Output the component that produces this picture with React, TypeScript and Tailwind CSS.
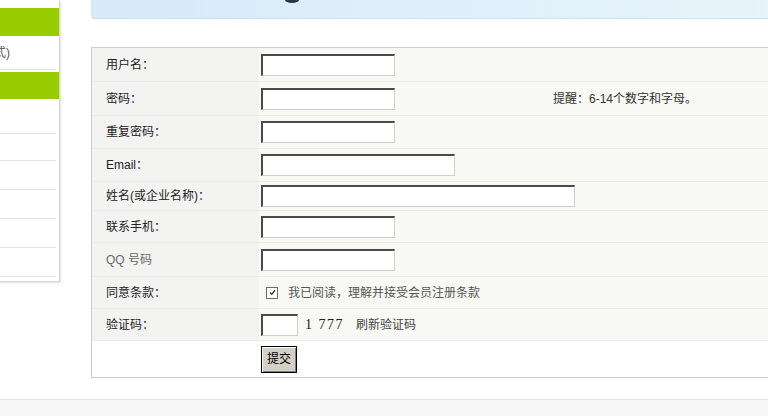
import React from 'react';

const rows = [
  { label: '用户名：', h: 'h-[34px]', field: 'short' },
  { label: '密码：', h: 'h-[34px]', field: 'password' },
  { label: '重复密码：', h: 'h-[33px]', field: 'short' },
  { label: 'Email：', h: 'h-[33px]', field: 'email' },
  { label: '姓名(或企业名称)：', h: 'h-[29px]', field: 'name' },
  { label: '联系手机：', h: 'h-[32px]', field: 'short' },
  { label: 'QQ 号码', h: 'h-[34px]', field: 'short' },
  { label: '同意条款：', h: 'h-[32px]', field: 'agree' },
  { label: '验证码：', h: 'h-[32px]', field: 'captcha' },
];

const inputCls =
  'h-[22px] bg-white border-t-2 border-l-2 border-b border-r border-t-[#4a4a4a] border-l-[#4a4a4a] border-b-[#cfcfcf] border-r-[#cfcfcf] outline-none px-1 text-[12px]';

const Field: React.FC<{ kind: string }> = ({ kind }) => {
  switch (kind) {
    case 'password':
      return (
        <>
          <input type="password" className={`${inputCls} w-[134px]`} />
          <span className="ml-[158px] text-[#333]">提醒：6-14个数字和字母。</span>
        </>
      );
    case 'email':
      return <input className={`${inputCls} w-[194px]`} />;
    case 'name':
      return <input className={`${inputCls} w-[314px]`} />;
    case 'agree':
      return (
        <>
          <span className="ml-[5px] w-[12px] h-[12px] border border-[#6a6a6a] bg-white flex items-center justify-center">
            <svg width="9" height="9" viewBox="0 0 9 9">
              <path d="M2 4.5 L3.8 6.3 L7 2.2" stroke="#222" strokeWidth="1.2" fill="none" />
            </svg>
          </span>
          <span className="ml-[10px] text-[#555]">我已阅读，理解并接受会员注册条款</span>
        </>
      );
    case 'captcha':
      return (
        <>
          <input className={`${inputCls} w-[37px]`} />
          <span className="ml-[7px] font-['Liberation_Serif',serif] text-[14px] tracking-[1.5px] text-[#222]">1 777</span>
          <span className="ml-[12px] text-[#444]">刷新验证码</span>
        </>
      );
    default:
      return <input className={`${inputCls} w-[134px]`} />;
  }
};

export default function App() {
  return (
    <div className="w-[768px] h-[416px] overflow-hidden bg-white flex flex-col font-['Liberation_Sans','Noto_Sans_CJK_SC',sans-serif] text-[12px]">
      <div className="flex h-[399px]">
        {/* Sidebar (mostly off-screen) */}
        <aside className="w-[200px] -ml-[140px] shrink-0 self-start h-[282px] bg-white border-r border-b border-[#d6d6d6] shadow-[1px_1px_2px_rgba(0,0,0,0.12)] flex flex-col pt-[8px]">
          <div className="h-[28px] bg-[#99cc00]" />
          <div className="h-[34px] mr-[3px] border-b border-[#e2e2e2] flex items-center">
            <span className="w-[150px] text-right whitespace-nowrap text-[#555]">(免费注册方式)</span>
          </div>
          <div className="h-[27px] mt-[2px] bg-[#99cc00]" />
          <div className="h-[35px] mr-[3px] border-b border-[#e2e2e2]" />
          <div className="h-[27px] mr-[3px] border-b border-[#e2e2e2]" />
          <div className="h-[29px] mr-[3px] border-b border-[#e2e2e2]" />
          <div className="h-[29px] mr-[3px] border-b border-[#e2e2e2]" />
          <div className="h-[29px] mr-[3px] border-b border-[#e2e2e2]" />
          <div className="h-[29px] mr-[3px] border-b border-[#e2e2e2]" />
        </aside>

        <main className="ml-[31px] flex flex-col">
          {/* Banner */}
          <div className="relative w-[700px] h-[19px] rounded-bl-[4px] bg-gradient-to-r from-[#d6eaf8] via-[#e0effa] to-[#e8f4fb] border-b border-[#c8e2f3]">
            <svg className="absolute left-[193px] top-0" width="16" height="4" viewBox="0 0 16 4">
              <ellipse cx="8" cy="0" rx="7" ry="3" fill="#2b3440" />
            </svg>
          </div>

          {/* Registration form */}
          <div className="mt-[28px] w-[700px] border border-[#cccccc] flex flex-col">
            {rows.map((r) => (
              <div key={r.label} className={`${r.h} flex border-b border-[#eaede6]`}>
                <div className={`w-[167px] shrink-0 bg-[#f3f4f2] pl-[14px] flex items-center ${r.label.startsWith('QQ') ? 'text-[#666]' : 'text-[#222]'}`}>
                  {r.label}
                </div>
                <div className="flex-1 bg-[#f8f9f4] pl-[2px] flex items-center">
                  <Field kind={r.field} />
                </div>
              </div>
            ))}
            <div className="h-[36px] flex bg-white">
              <div className="w-[167px] shrink-0" />
              <div className="pl-[2px] flex items-center">
                <button className="w-[36px] h-[27px] bg-[#d4d0c8] border border-black shadow-[inset_1px_1px_0_#ffffff,inset_-1px_-1px_0_#808080] text-[12px] text-black">
                  提交
                </button>
              </div>
            </div>
          </div>
        </main>
      </div>
      <footer className="flex-1 bg-[#f6f6f6] border-t border-[#e3e3e3]" />
    </div>
  );
}
